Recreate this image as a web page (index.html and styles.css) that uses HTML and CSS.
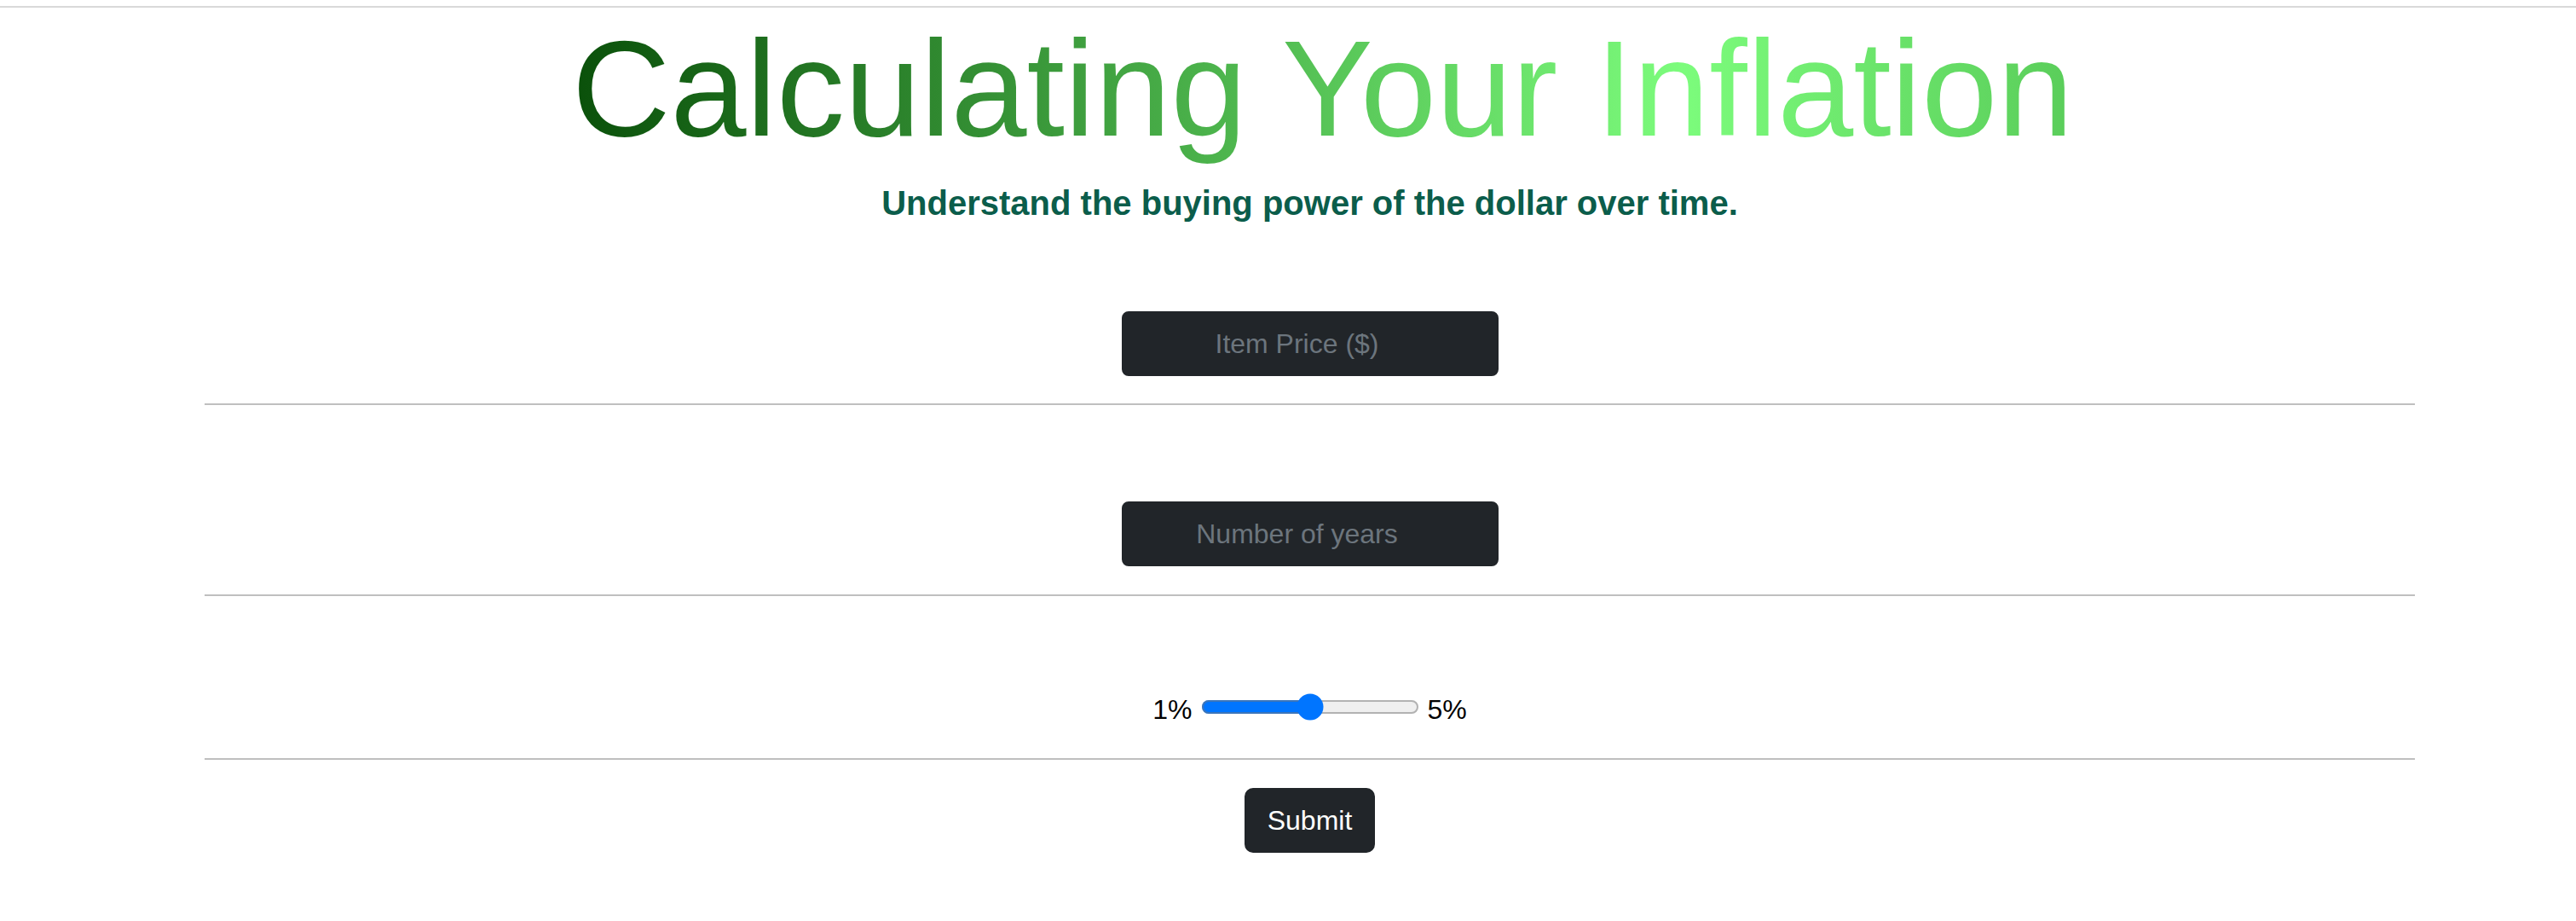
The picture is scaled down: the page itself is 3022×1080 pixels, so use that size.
FILE: index.html
```html
<!DOCTYPE html>
<html lang="en">
<head>
<meta charset="utf-8">
<title>Calculating Your Inflation</title>
<link rel="stylesheet" href="styles.css">
</head>
<body>
<div class="top-rule"></div>
<main class="page">
  <h1 class="title"><span class="title-text">Calculating Your Inflation</span></h1>
  <h2 class="subtitle">Understand the buying power of the dollar over time.</h2>
  <form class="calc">
    <div class="field field-price">
      <input class="num-input" type="text" placeholder="Item Price ($)">
    </div>
    <hr class="rule rule-a">
    <div class="field field-years">
      <input class="num-input" type="text" placeholder="Number of years">
    </div>
    <hr class="rule rule-b">
    <div class="range-row">
      <span class="range-label">1%</span>
      <input class="rate" type="range" min="1" max="5" value="3">
      <span class="range-label">5%</span>
    </div>
    <hr class="rule rule-c">
    <div class="actions">
      <button class="submit" type="button">Submit</button>
    </div>
  </form>
</main>
</body>
</html>
```

FILE: styles.css
```css
html, body {
  margin: 0;
  padding: 0;
  background: #ffffff;
}

body {
  font-family: "Liberation Sans", Arial, sans-serif;
  color: #000000;
}

.top-rule {
  margin-top: 7px;
  height: 2px;
  background: #d9d9d9;
}

.page {
  margin: 0 189px 0 240px;
  text-align: center;
}

.title {
  margin: 3px 0 0;
  padding-left: 30px;
  font-size: 160px;
  line-height: 184px;
  font-weight: 400;
}

.title-text {
  display: inline-block;
  background: linear-gradient(90deg, #0a500a 0%, #7cfc7c 74%, #5acd5a 100%);
  -webkit-background-clip: text;
  background-clip: text;
  color: transparent;
}

.subtitle {
  margin: 18px 0 0;
  font-size: 40px;
  line-height: 48px;
  font-weight: 700;
  color: #0b5d4b;
}

.calc {
  margin: 0;
}

.field {
  display: flex;
  justify-content: center;
}

.field-price {
  margin-top: 103px;
}

.field-years {
  margin-top: 113px;
}

.num-input {
  box-sizing: border-box;
  width: 442px;
  height: 76px;
  margin: 0;
  padding: 12px 54px 12px 24px;
  border: 2px solid #212529;
  border-radius: 8px;
  background: #212529;
  color: #ffffff;
  font-family: "Liberation Sans", Arial, sans-serif;
  font-size: 32px;
  line-height: 48px;
  text-align: center;
  outline: none;
}

.num-input::placeholder {
  color: #6c757d;
  opacity: 1;
}

.rule {
  border: 0;
  height: 2px;
  background: #bfbfbf;
  margin: 0;
}

.rule-a {
  margin-top: 32px;
}

.rule-b {
  margin-top: 33px;
}

.rule-c {
  margin-top: 33px;
}

.range-row {
  margin-top: 109px;
  height: 48px;
  display: flex;
  justify-content: center;
  align-items: center;
  gap: 10px;
  font-size: 32px;
  line-height: 48px;
}

.rate {
  zoom: 2;
  width: 128px;
  margin: 0 0 3px;
  accent-color: #0075ff;
}

.actions {
  margin-top: 33px;
  display: flex;
  justify-content: center;
}

.submit {
  box-sizing: border-box;
  height: 76px;
  padding: 12px 25px;
  border: 2px solid #212529;
  border-radius: 10px;
  background: #212529;
  color: #ffffff;
  font-family: "Liberation Sans", Arial, sans-serif;
  font-size: 32px;
  line-height: 48px;
  cursor: pointer;
}
```
